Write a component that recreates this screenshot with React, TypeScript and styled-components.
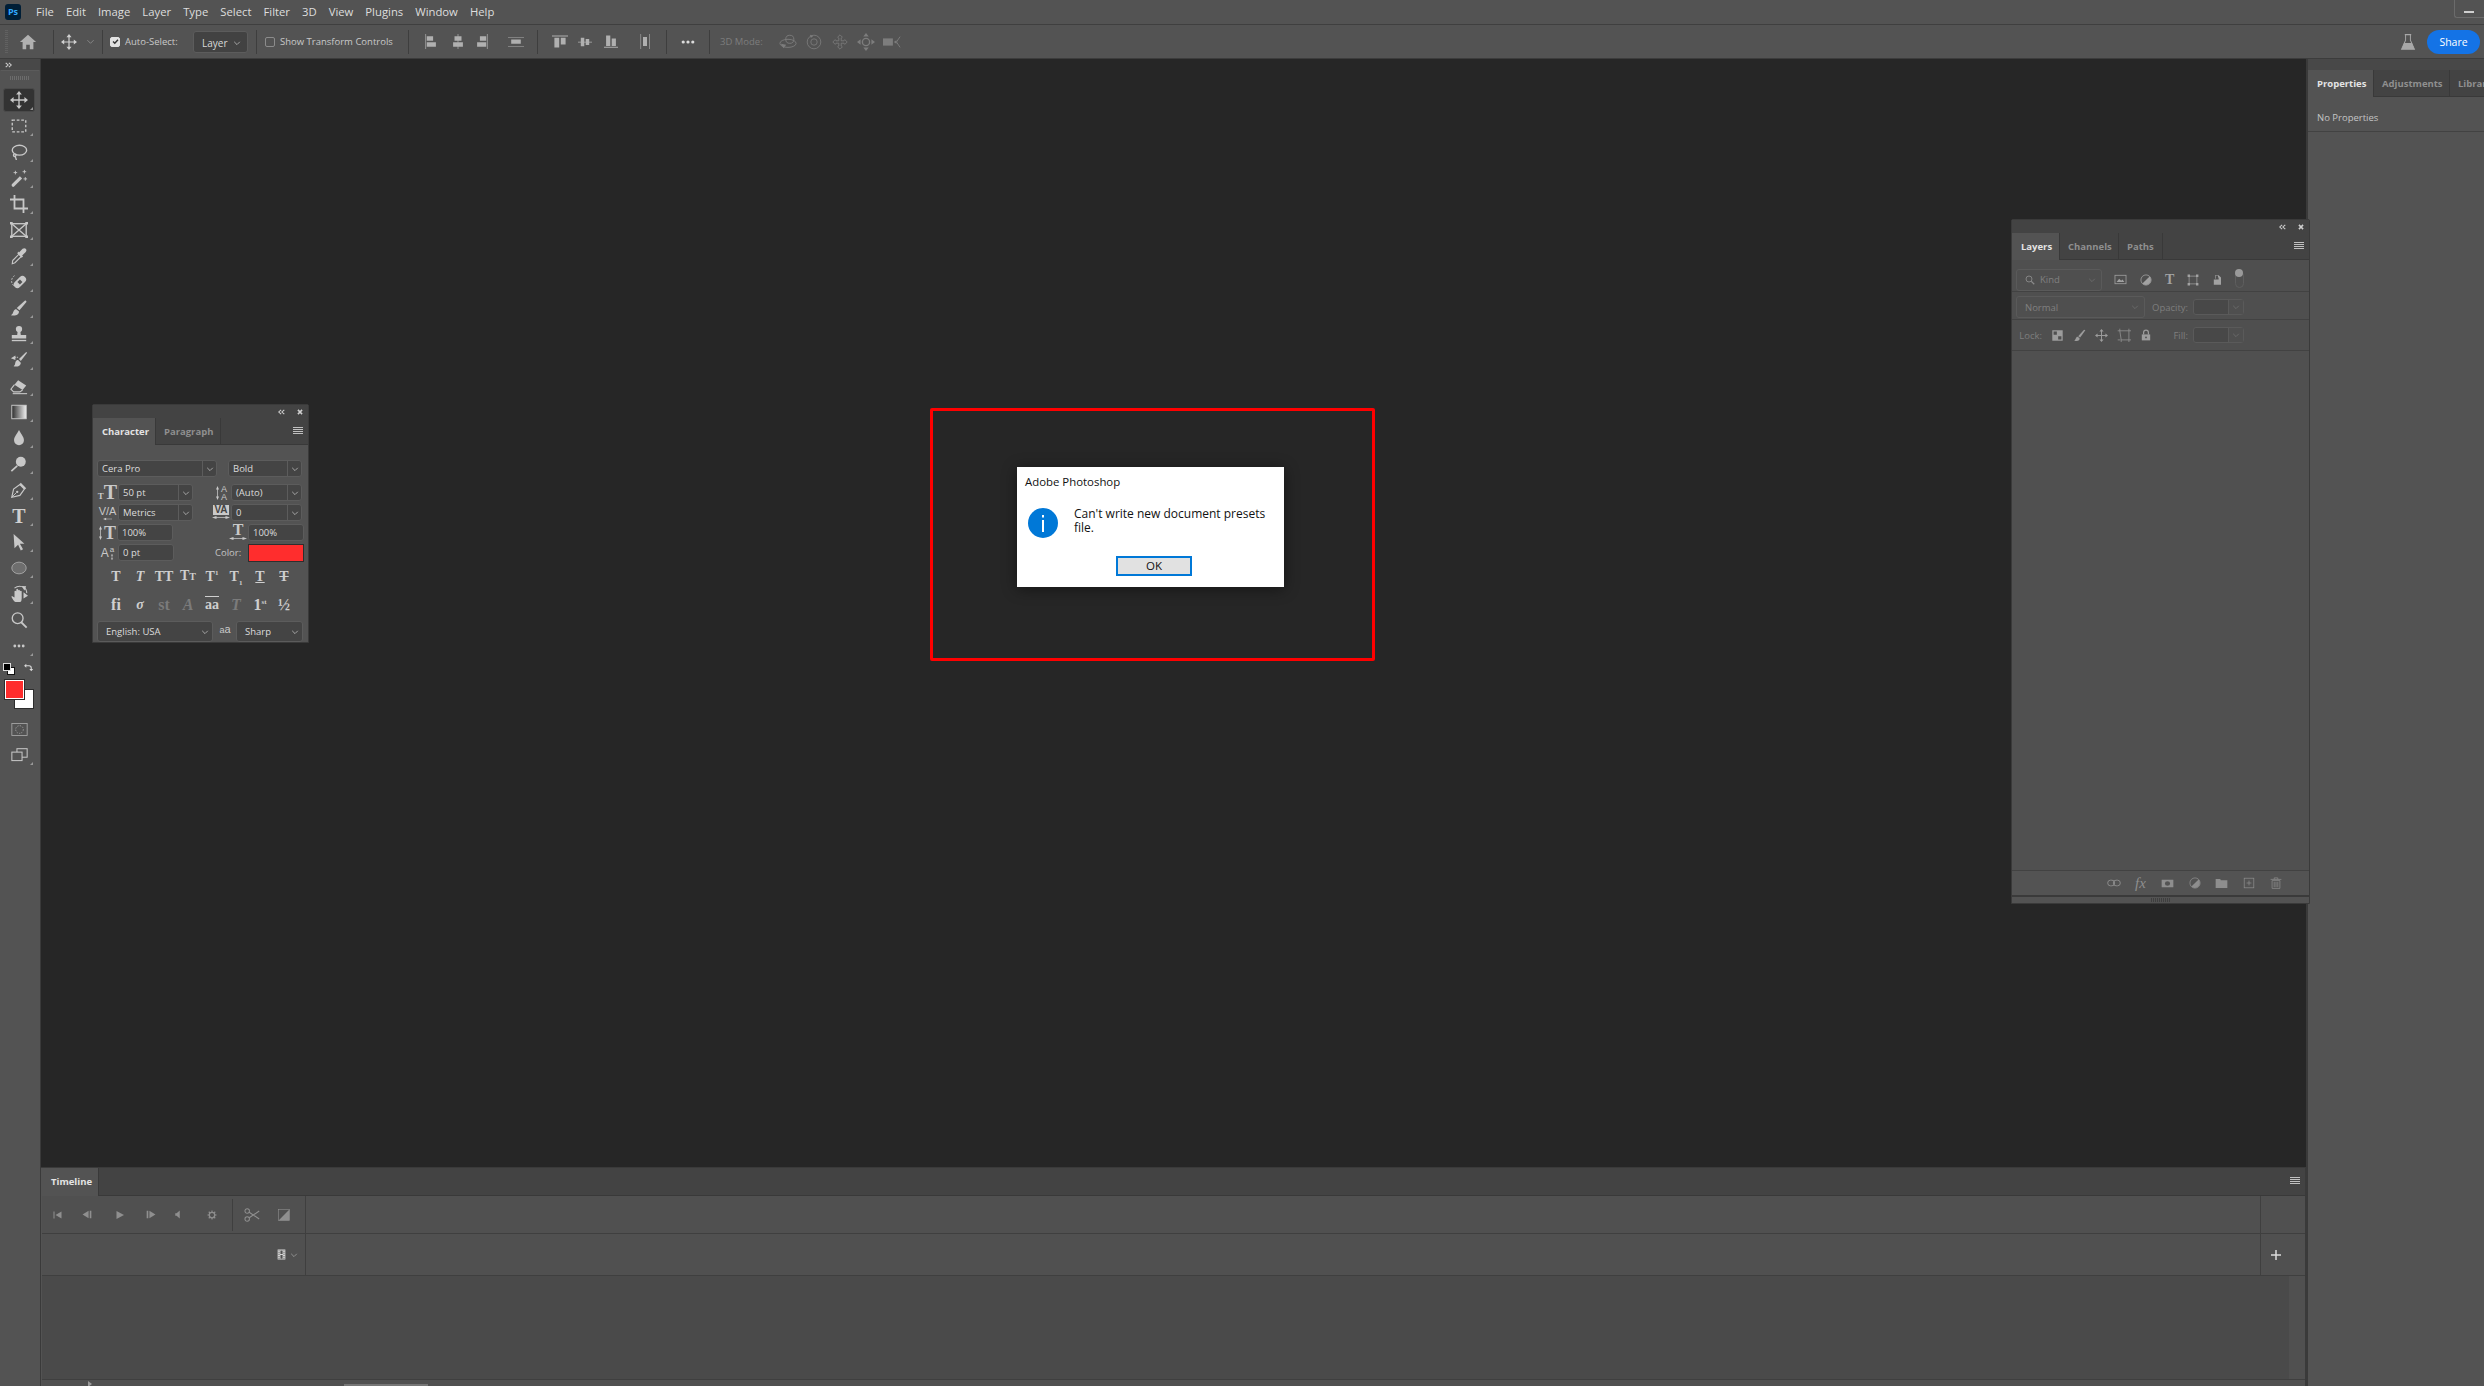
import React from "react";
import styled, { createGlobalStyle } from "styled-components";

const UI = `"Open Sans", "Noto Sans", "Liberation Sans", sans-serif`;
const SERIF = `"Liberation Serif", "DejaVu Serif", serif`;
const SANS = `"Liberation Sans", Arial, sans-serif`;

const GlobalStyle = createGlobalStyle`
  html, body { margin: 0; padding: 0; background: #262626; overflow: hidden; }
  * { box-sizing: border-box; }
`;

const Shell = styled.div`
  width: 2484px;
  height: 1386px;
  display: flex;
  flex-direction: column;
  background: #535353;
  font-family: ${UI};
  overflow: hidden;
`;

/* ---------- icon drawings, all on a 20x20 grid ---------- */
const line = { fill: "none", stroke: "currentColor", strokeWidth: 1.5 };
const icons: Record<string, React.ReactNode> = {
  home: <path d="M10 2l9 8h-3v8h-4v-5H8v5H4v-8H1z" />,
  move: <><path {...line} d="M10 3v14M3 10h14" /><path d="M10 0l3.2 4H6.8zM10 20l3.2-4H6.8zM0 10l4-3.2v6.4zM20 10l-4-3.2v6.4z" /></>,
  marquee: <rect x="2.5" y="3.5" width="15" height="13" {...line} strokeDasharray="3 2" />,
  lasso: <><ellipse cx="10.5" cy="8" rx="8" ry="5.5" {...line} /><path {...line} d="M5 12c-2 1-1 3 0 3 2 0 2-2 1-3M6 15c0 2 1 2 1 4" /></>,
  wand: <><path d="M2 17L11 8l2.500 2.500L4.500 19.500q-1 1-2 0t-.5-2.500z" /><path d="M6 2v4M4 4h4M16 1v4M14 3h4M17 9v4M15 11h4" {...line} strokeWidth={1} /></>,
  crop: <path d="M5 0v15h15M0 5h15v15" fill="none" stroke="currentColor" strokeWidth="2" />,
  frame: <><rect x="2" y="3" width="16" height="14" {...line} /><path d="M2 3l16 14M18 3L2 17" {...line} /><path d="M0 1h3v3H0zM17 1h3v3h-3zM0 16h3v3H0zM17 16h3v3h-3z" /></>,
  dropper: <><path d="M3 15L10 8l2.500 2.500-7 7-3 1z" {...line} strokeWidth={1.2} /><path d="M10 6l4-4q2-1.500 3.500 0t0 3.500l-4 4 1 1-1.500 1.500-5-5L9.500 5z" /></>,
  heal: <><g transform="rotate(-45 11 10)"><rect x="3" y="6" width="16" height="8" rx="4" /><rect x="9" y="8" width="4" height="4" fill="#535353" /></g><path d="M4 14A7 7 0 0 1 5 3" {...line} strokeWidth={1} strokeDasharray="2 1.500" /></>,
  brush: <><path d="M17 1.500l1.500 1.500-8 9.500-3-2.500z" /><path d="M7 11.500c-3 0-3 3-4 4.500-.5 1-1.500 1.500-2 2 4 1 9 .5 9-4z" /></>,
  stamp: <><circle cx="10" cy="4.500" r="3.500" /><path d="M8.500 7h3l.5 4h6v4H2v-4h6z" /><rect x="2" y="16.500" width="16" height="1.500" /></>,
  history: <><path d="M18 1l1 1-7 9-2-2z" /><path d="M9 10c-3 0-3 3-3.500 5-.5 1-1 1.500-1.500 2 3 1 8 0 8-4z" /><path d="M6 5L1 8l5 2z" /><path d="M5 7h4" {...line} strokeWidth={1} strokeDasharray="1.500 1" /></>,
  eraser: <><path d="M9 3.500l9 6-4 5-9-6z" /><path d="M5 8.500l-4 5 3 3h7l3-2" {...line} strokeWidth={1.200} /><path d="M3 18.500h16" {...line} strokeWidth={1.200} /></>,
  gradient: <><defs><linearGradient id="gr"><stop offset="0" stopColor="#2c2c2c" /><stop offset="1" stopColor="#f0f0f0" /></linearGradient></defs><rect x="2" y="2.500" width="16" height="15" fill="url(#gr)" stroke="#cfcfcf" strokeWidth="1" /></>,
  drop: <path d="M10 1c2.500 5 5.500 7.500 5.500 11.500a5.500 5.500 0 0 1-11 0C4.500 8.500 7.500 6 10 1z" />,
  dodge: <><circle cx="12" cy="7.500" r="5.500" /><path d="M8 12l-6.500 6" {...line} strokeWidth={1.800} /></>,
  pen: <><path d="M2 18l2-9 7-5 5 5-5 7z" {...line} strokeWidth={1.300} /><path d="M2 18l5-5" {...line} strokeWidth={1} /><circle cx="8" cy="12" r="1.300" /><path d="M12 2l6 6-1.500 1.500-6-6z" /></>,
  path: <path d="M4 1l12 11h-5l3.500 6-2.500 1.500-3-6.500L5 17z" />,
  ellipse: <ellipse cx="10" cy="10" rx="8" ry="6.500" fill="#6e6e6e" stroke="#a8a8a8" strokeWidth="1" />,
  hand: <><path d="M6 19c-2-1-3-3-4-5-1-1 0-2 1.500-1L5 14V7q1-1.500 2 0v4-6q1-1.500 2 0v6-5q1-1.500 2 0v5-4q1-1 2 0v8q0 3-1.500 4z" /><path d="M5 3.500Q10-.5 16 3q3 2 2.500 6" {...line} strokeWidth={1.200} /><path d="M13 1l5 .5-2 4.500zM15 8l5 4-5 3z" /></>,
  zoom: <><circle cx="8.500" cy="8" r="6" {...line} strokeWidth={1.500} /><path d="M12.500 12.500l6 6" {...line} strokeWidth={2} /></>,
  dots: <><circle cx="4" cy="10" r="2" /><circle cx="10" cy="10" r="2" /><circle cx="16" cy="10" r="2" /></>,
  swap: <path d="M2 5l4-3.500V4h5q5 0 5 5v2h2.500L15 15l-3.500-4H14V9q0-3-3-3H6v2.500z" />,
  quick: <><rect x="1" y="3" width="18" height="14" fill="none" stroke="currentColor" strokeWidth="1" /><circle cx="10" cy="10" r="4.500" fill="none" stroke="currentColor" strokeWidth="1" strokeDasharray="1.500 1.500" /></>,
  screen: <><rect x="7" y="2" width="12" height="10" {...line} strokeWidth={1.200} /><rect x="1" y="6" width="12" height="10" fill="#535353" stroke="currentColor" strokeWidth="1.200" /></>,
  alignL: <path d="M2 0h1v20H2zM4 3h9v6H4zM4 11h13v6H4z" />,
  alignC: <path d="M9.500 0h1v20h-1zM5 3h10v6H5zM3 11h14v6H3z" />,
  alignR: <path d="M17 0h1v20h-1zM7 3h9v6H7zM3 11h13v6H3z" />,
  distV: <path d="M0 2h20v1H0zM0 17h20v1H0zM4 6h12v7H4z" />,
  alignT: <path d="M0 2h20v1.200H0zM3 5h6v13H3zM11 5h6v9h-6z" />,
  alignM: <path d="M0 9.500h20v1.200H0zM4 3h5v14H4zM11 5h5v10h-5z" />,
  alignB: <path d="M0 17h20v1.200H0zM3 2h6v14H3zM11 6h6v10h-6z" />,
  distH: <path d="M1 0h1.200v20H1zM18 0h1.200v20H18zM6 4h8v12H6z" />,
  orbit: <><circle cx="12" cy="7" r="4.500" {...line} strokeWidth={1} /><ellipse cx="10" cy="11.500" rx="9" ry="4.500" {...line} strokeWidth={1} /><path d="M2 12l6 1-3 4z" /></>,
  roll: <><circle cx="10" cy="10" r="8.500" {...line} strokeWidth={1} /><circle cx="10" cy="10" r="4" {...line} strokeWidth={1} /><path d="M5 1l4 1.500L6 5z" /></>,
  pan3d: <path d="M10 1l3 3-1.500 1v3.500H15L16 7l3 3-3 3-1-1.500h-3.500V15l1.500 1-3 3-3-3 1.500-1v-3.500H5L4 13l-3-3 3-3 1 1.500h3.500V5L7 4z" fill="none" stroke="currentColor" strokeWidth="1" />,
  slide: <><circle cx="10" cy="10" r="4" {...line} /><path d="M10 0l3 4H7zM10 20l3-4H7zM0 10l4-3v6zM20 10l-4-3v6z" /></>,
  camera: <><rect x="0" y="6" width="11" height="8" /><path d="M12 10l3-2v4z" /><path d="M19 4l-4 6 4 6" {...line} strokeWidth={1} /></>,
  flask: <><path d="M7 2v6L2 18h16L13 8V2" {...line} strokeWidth={1.200} /><path d="M6 1h8v1.500H6zM5 11h10l3 7H2z" /></>,
  chev: <path d="M3 7l7 7 7-7" fill="none" stroke="currentColor" strokeWidth="2" />,
  tick: <path d="M3 10l5 5 9-10" fill="none" stroke="currentColor" strokeWidth="4" />,
  doubleRight: <path d="M2 3l7 7-7 7M11 3l7 7-7 7" fill="none" stroke="currentColor" strokeWidth="3" />,
  doubleLeft: <path d="M9 3l-7 7 7 7M18 3l-7 7 7 7" fill="none" stroke="currentColor" strokeWidth="3" />,
  cross: <path d="M3 3l14 14M17 3L3 17" fill="none" stroke="currentColor" strokeWidth="5" />,
  arrowH: <path d="M0 10l5-6v4.500h10V4l5 6-5 6v-4.500H5V16z" />,
  arrowV: <path d="M10 0l6 5h-4.500v10H16l-6 5-6-5h4.500V5H4z" />,
  arrowL: <path d="M0 10l7-6v4.500h13v3H7V16z" />,
  search: <><circle cx="8" cy="8" r="6" {...line} strokeWidth={1.800} /><path d="M12.500 12.500l6 6" {...line} strokeWidth={2.400} /></>,
  pixel: <><rect x="1.500" y="3.500" width="17" height="13" {...line} strokeWidth={1.200} /><path d="M4 14l4-5 3 3 2-2 3 4z" /></>,
  adjust: <><circle cx="10" cy="10" r="8.500" {...line} strokeWidth={1.300} /><path d="M16 4A8.500 8.500 0 0 1 4 16z" /></>,
  shape: <><rect x="3.500" y="3.500" width="13" height="13" {...line} strokeWidth={1.200} /><path d="M1 1h4v4H1zM15 1h4v4h-4zM1 15h4v4H1zM15 15h4v4h-4z" /></>,
  smart: <path d="M5 2h6l4 4v12H3V9h8V6h-1V3H6v5H5z" />,
  checker: <path d="M2 2h16v16H2zM4 4v5h5V4zM11 11v5h5v-5z" fillRule="evenodd" />,
  lockBrush: <><path d="M17 1l2 1-8 11-3-2z" /><path d="M7 12c-3 0-2 4-5 6 4 1 9 1 8-4z" /></>,
  artboard: <><path d="M4 4h13v13H6z" {...line} strokeWidth={1} /><path d="M1 4h3M4 1v3M17 17h3M17 17v3M1 17h4M6 17v3M17 1v3M17 4h3" {...line} strokeWidth={1} /></>,
  lock: <><path d="M6 9V6a4 4 0 0 1 8 0v3" {...line} strokeWidth={2} /><path d="M3 9h14v10H3z" /><circle cx="10" cy="14" r="1.500" fill="#4f4f4f" /></>,
  link: <><rect x="1" y="6" width="10" height="8" rx="4" {...line} strokeWidth={1.300} /><rect x="9" y="6" width="10" height="8" rx="4" {...line} strokeWidth={1.300} /></>,
  maskIcon: <path d="M1 3h18v14H1zM10 6a4 4 0 1 0 0 8 4 4 0 0 0 0-8z" fillRule="evenodd" />,
  folder: <path d="M1 3h7l1 2h10v12H1z" />,
  addNew: <><rect x="2" y="2" width="16" height="16" {...line} strokeWidth={1.200} /><path d="M10 6v8M6 10h8" {...line} strokeWidth={1.200} /></>,
  trash: <><path d="M1 4h18M7 4V1.500h6V4" {...line} strokeWidth={1.200} /><path d="M3.500 6h13v13h-13zM7 8v9M10 8v9M13 8v9" {...line} strokeWidth={1.200} /></>,
  first: <path d="M3 3h2v14H3zM19 3v14L7 10z" />,
  prev: <path d="M1 10l11-7v14zM14 3h3v14h-3z" />,
  play: <path d="M3 2l15 8-15 8z" />,
  next: <path d="M3 3h3v14H3zM8 3l11 7-11 7z" />,
  mute: <path d="M5 7h3l7-6v18l-7-6H5z" />,
  gear: <><circle cx="10" cy="10" r="5.500" {...line} strokeWidth={2.500} /><path d="M10 1v4M10 15v4M1 10h4M15 10h4M3.500 3.500l3 3M13.500 13.500l3 3M3.500 16.500l3-3M13.500 6.500l3-3" {...line} strokeWidth={2.200} /></>,
  scissors: <><circle cx="4" cy="5" r="2.800" {...line} strokeWidth={1.300} /><circle cx="4" cy="15" r="2.800" {...line} strokeWidth={1.300} /><path d="M6.500 6.500L19 15M6.500 13.500L19 5" {...line} strokeWidth={1.300} /></>,
  transition: <><rect x="1" y="1" width="18" height="18" {...line} strokeWidth={1} /><path d="M19 1v18H1z" /></>,
  film: <path d="M3 1h14v18H3zM4.500 2.500v1.500h2V2.500zM4.500 6v1.500h2V6zM4.500 9.500V11h2V9.500zM4.500 13v1.500h2V13zM4.500 16v1.500h2V16zM13.500 2.500V4h2V2.500zM13.500 6v1.500h2V6zM13.500 9.500V11h2V9.500zM13.500 13v1.500h2V13zM13.500 16v1.500h2V16zM8 2.500V9h4V2.500zM8 11v6.500h4V11z" fillRule="evenodd" />,
  plus: <path d="M8.500 0h3v8.500H20v3h-8.500V20h-3v-8.500H0v-3h8.500z" />,
};

const Svg = styled.svg<{ $ml?: number; $c?: string }>`
  flex: none;
  display: block;
  margin-left: ${(p) => p.$ml ?? 0}px;
  fill: currentColor;
  color: ${(p) => p.$c ?? "inherit"};
`;

type IconProps = { name: string; w: number; h?: number; ml?: number; c?: string };

const Icon = ({ name, w, h, ml, c }: IconProps) => (
  <Svg width={w} height={h ?? w} viewBox="0 0 20 20" preserveAspectRatio="none" $ml={ml} $c={c}>
    {icons[name]}
  </Svg>
);

/* ---------- menu ---------- */
const MenuBar = styled.div`
  height: 25px;
  flex: none;
  display: flex;
  align-items: center;
  padding-left: 5px;
  background: #535353;
  border-bottom: 1px solid #3f3f3f;
  position: relative;
`;

const PsLogo = styled.div`
  width: 16px;
  height: 16px;
  border-radius: 3px;
  background: #001e36;
  color: #31a8ff;
  font: 700 9px/16px ${UI};
  text-align: center;
  margin-right: 15px;
`;

const MenuList = styled.div`
  display: flex;
  gap: 12px;
`;

const MenuItem = styled.span`
  color: #dedede;
  font-size: 11.3px;
  line-height: 24px;
  white-space: nowrap;
`;

const MinButton = styled.div`
  position: absolute;
  right: 0;
  top: 0;
  width: 30px;
  height: 18px;
  border: 1px solid #6b6b6b;
  border-top: none;
  border-right: none;
  border-bottom-left-radius: 3px;
  &::after {
    content: "";
    position: absolute;
    left: 9px;
    top: 11px;
    width: 10px;
    height: 2px;
    background: #cfcfcf;
  }
`;

/* ---------- options bar ---------- */
const OptionsBar = styled.div`
  height: 34px;
  flex: none;
  display: flex;
  align-items: center;
  color: #b0b0b0;
  background: #535353;
  border-bottom: 1px solid #3c3c3c;
`;

const Grip = styled.div`
  margin-left: 5px;
  width: 3px;
  height: 24px;
  flex: none;
  background: repeating-linear-gradient(to bottom, #6a6a6a 0 1px, transparent 1px 2px);
  opacity: 0.6;
`;

const Sep = styled.div<{ $ml: number }>`
  margin-left: ${(p) => p.$ml}px;
  width: 1px;
  height: 24px;
  flex: none;
  background: #3e3e3e;
`;

const Check = styled.span<{ $ml: number; $on?: boolean }>`
  margin-left: ${(p) => p.$ml}px;
  width: 10px;
  height: 10px;
  flex: none;
  border-radius: 2px;
  display: flex;
  align-items: center;
  justify-content: center;
  background: ${(p) => (p.$on ? "#e2e2e2" : "transparent")};
  border: 1px solid ${(p) => (p.$on ? "#e2e2e2" : "#8c8c8c")};
`;

const OptLabel = styled.span<{ $ml: number; $w: number; $dim?: boolean }>`
  margin-left: ${(p) => p.$ml}px;
  width: ${(p) => p.$w}px;
  flex: none;
  font-size: 9.5px;
  white-space: nowrap;
  color: ${(p) => (p.$dim ? "#7d7d7d" : "#c9c9c9")};
`;

const OptSelect = styled.div`
  margin-left: 15px;
  width: 55px;
  height: 22px;
  flex: none;
  display: flex;
  align-items: center;
  justify-content: space-between;
  padding: 2px 6px 0 8px;
  background: #424242;
  border: 1px solid #5c5c5c;
  border-radius: 3px;
  color: #d8d8d8;
  font-size: 10px;
`;

const Spacer = styled.div`
  flex: 1;
`;

const ShareButton = styled.div`
  margin: 0 4px 0 11px;
  width: 53px;
  height: 24px;
  flex: none;
  border-radius: 12px;
  background: #1473e6;
  color: #fff;
  font-size: 10.5px;
  line-height: 24px;
  text-align: center;
`;

/* ---------- workspace ---------- */
const Workspace = styled.div`
  flex: 1;
  min-height: 0;
  display: flex;
`;

const ToolColumn = styled.div`
  width: 41px;
  flex: none;
  display: flex;
  flex-direction: column;
  background: #535353;
  border-right: 1px solid #3a3a3a;
`;

const ToolHead = styled.div`
  height: 11px;
  flex: none;
  display: flex;
  align-items: center;
  padding-left: 5px;
  color: #d0d0d0;
  background: #484848;
`;

const ToolBox = styled.div`
  flex: 1;
  margin: 0 1px;
  display: flex;
  flex-direction: column;
  color: #c8c8c8;
  border-top: 1px solid #5b5b5b;
`;

const ToolGrip = styled.div`
  margin: 5px auto 0;
  width: 20px;
  height: 4px;
  flex: none;
  background: repeating-linear-gradient(to right, #6c6c6c 0 1px, transparent 1px 2px);
`;

const ToolList = styled.div`
  margin-top: 7px;
  display: flex;
  flex-direction: column;
`;

const ToolButton = styled.div<{ $active?: boolean; $flyout?: boolean }>`
  position: relative;
  width: 32px;
  height: 26px;
  margin-left: 2px;
  display: flex;
  align-items: center;
  justify-content: center;
  &::before {
    content: "";
    display: ${(p) => (p.$active ? "block" : "none")};
    position: absolute;
    inset: 1px 0;
    background: #333;
    border: 1px solid #4a4a4a;
    border-radius: 3px;
  }
  &::after {
    content: "";
    display: ${(p) => (p.$flyout === false ? "none" : "block")};
    position: absolute;
    right: 2px;
    bottom: 3px;
    border-left: 3px solid transparent;
    border-bottom: 3px solid #999;
  }
  & > * {
    position: relative;
    z-index: 1;
  }
`;

const TypeToolGlyph = styled.span`
  color: #d0d0d0;
  font: 700 20px/20px ${SERIF};
`;

const ColorWell = styled.div`
  position: relative;
  height: 54px;
  flex: none;
  margin-top: 3px;
`;

const MiniBack = styled.span`
  position: absolute;
  left: 6px;
  top: 5px;
  width: 8px;
  height: 8px;
  background: #fff;
  border: 1px solid #111;
`;

const MiniFront = styled.span`
  position: absolute;
  left: 2px;
  top: 1px;
  width: 8px;
  height: 8px;
  background: #000;
  border: 1px solid #ddd;
`;

const SwapSlot = styled.span`
  position: absolute;
  left: 22px;
  top: 1px;
`;

const BackSwatch = styled.span`
  position: absolute;
  left: 13px;
  top: 27px;
  width: 20px;
  height: 20px;
  background: #fff;
  border: 1px solid #2d2d2d;
`;

const FrontSwatch = styled.span`
  position: absolute;
  left: 4px;
  top: 18px;
  width: 19px;
  height: 19px;
  background: #ff2d2d;
  border: 1px solid #fff;
  outline: 1px solid #2d2d2d;
`;

const ToolExtra = styled.div<{ $mt: number }>`
  margin: ${(p) => p.$mt}px 0 0 10px;
  color: #a8a8a8;
`;

const ToolScreen = styled(ToolButton)`
  margin-top: 4px;
`;

/* ---------- centre ---------- */
const Center = styled.div`
  flex: 1;
  min-width: 0;
  display: flex;
  flex-direction: column;
`;

const DocArea = styled.div`
  flex: 1;
  position: relative;
  background: #262626;
`;

const RedFrame = styled.div`
  position: absolute;
  left: 889px;
  top: 349px;
  width: 445px;
  height: 253px;
  border: 3px solid #f00;
  border-radius: 2px;
`;

const Dialog = styled.div`
  position: absolute;
  left: 84px;
  top: 56px;
  width: 267px;
  height: 120px;
  background: #fff;
  box-shadow: 0 2px 14px rgba(0, 0, 0, 0.45);
  color: #111;
  display: flex;
  flex-direction: column;
`;

const DialogTitle = styled.div`
  padding: 7px 0 0 8px;
  font-size: 11.4px;
  line-height: 16px;
`;

const DialogBody = styled.div`
  display: flex;
  margin-top: 16px;
  padding-left: 11px;
`;

const InfoIcon = styled.svg`
  flex: none;
  margin-top: 2px;
`;

const DialogText = styled.div`
  margin-left: 16px;
  width: 196px;
  font-size: 12px;
  line-height: 13.5px;
  margin-top: 1px;
`;

const OkButton = styled.div`
  margin: 18px 0 0 99px;
  width: 76px;
  height: 20px;
  background: #e1e1e1;
  border: 2px solid #0078d7;
  text-align: center;
  font-size: 11.5px;
  line-height: 16px;
`;

/* ---------- floating panels ---------- */
const FloatPanel = styled.div<{ $x: number; $y: number; $w: number; $h: number }>`
  position: absolute;
  left: ${(p) => p.$x}px;
  top: ${(p) => p.$y}px;
  width: ${(p) => p.$w}px;
  height: ${(p) => p.$h}px;
  display: flex;
  flex-direction: column;
  background: #535353;
  border: 1px solid #3a3a3a;
  border-radius: 2px 2px 0 0;
  overflow: hidden;
`;

const PanelTitle = styled.div`
  height: 13px;
  flex: none;
  display: flex;
  align-items: center;
  justify-content: flex-end;
  gap: 12px;
  padding: 1px 5px 0 0;
  background: #434343;
  color: #cfcfcf;
`;

const TabStrip = styled.div`
  height: 27px;
  flex: none;
  display: flex;
  align-items: stretch;
  background: #434343;
  border-bottom: 1px solid #393939;
  position: relative;
`;

const Tab = styled.div<{ $active?: boolean; $w: number }>`
  width: ${(p) => p.$w}px;
  flex: none;
  font-size: 9.5px;
  font-weight: 700;
  line-height: 27px;
  padding-left: ${(p) => (p.$active ? 9 : 8)}px;
  white-space: nowrap;
  overflow: hidden;
  color: ${(p) => (p.$active ? "#e4e4e4" : "#8f8f8f")};
  background: ${(p) => (p.$active ? "#535353" : "transparent")};
  border-right: 1px solid #393939;
  margin-bottom: ${(p) => (p.$active ? "-1px" : "0")};
`;

const PanelMenu = styled.div`
  position: absolute;
  right: 5px;
  top: 9px;
  width: 10px;
  height: 7px;
  background: repeating-linear-gradient(to bottom, #c0c0c0 0 1px, transparent 1px 2px);
`;

const CharBody = styled.div`
  flex: 1;
  display: flex;
  flex-direction: column;
  padding: 15px 0 0 4px;
  color: #c6c6c6;
`;

const FieldRow = styled.div<{ $mt?: number }>`
  height: 17px;
  flex: none;
  display: flex;
  align-items: center;
  margin-top: ${(p) => p.$mt ?? 3}px;
`;

const Field = styled.div<{ $ml?: number; $w: number; $chev?: boolean; $h?: number; $pad?: number }>`
  margin-left: ${(p) => p.$ml ?? 0}px;
  width: ${(p) => p.$w}px;
  height: ${(p) => p.$h ?? 17}px;
  flex: none;
  display: flex;
  align-items: center;
  padding-left: ${(p) => p.$pad ?? 4}px;
  position: relative;
  background: #444;
  border: 1px solid #5c5c5c;
  border-radius: 3px;
  color: #dcdcdc;
  font-size: 9.5px;
  white-space: nowrap;
  padding-right: ${(p) => (p.$chev ? "15px" : "0")};
`;

const ChevBox = styled.span<{ $plain?: boolean }>`
  position: absolute;
  right: 0;
  top: 0;
  bottom: 0;
  width: 14px;
  display: flex;
  align-items: center;
  justify-content: center;
  border-left: ${(p) => (p.$plain ? "none" : "1px solid #5c5c5c")};
  color: #bdbdbd;
`;

/* the small marks beside the character fields */
const Mark = styled.span<{ $ml?: number; $w: number; $stack?: boolean; $mid?: boolean }>`
  margin-left: ${(p) => p.$ml ?? 0}px;
  width: ${(p) => p.$w}px;
  height: 17px;
  flex: none;
  display: flex;
  flex-direction: ${(p) => (p.$stack ? "column" : "row")};
  align-items: ${(p) => (p.$stack || p.$mid ? "center" : "baseline")};
  justify-content: center;
  gap: ${(p) => (p.$mid ? 1 : 0)}px;
  color: #c9c9c9;
  white-space: nowrap;
`;

const MarkColumn = styled.span`
  display: flex;
  flex-direction: column;
  align-items: center;
`;

const SerifText = styled.span<{ $size: number; $lh?: number }>`
  font: 700 ${(p) => p.$size}px/${(p) => p.$lh ?? 16}px ${SERIF};
`;

const SansText = styled.span<{ $size: number; $lh?: number }>`
  font: 400 ${(p) => p.$size}px/${(p) => p.$lh ?? 12}px ${SANS};
`;

const InvertedText = styled.span`
  background: #c9c9c9;
  color: #444;
  padding: 0 1px;
  font: 700 10px/10px ${SANS};
`;

const ColorLabel = styled.span`
  margin-left: 41px;
  width: 33px;
  font-size: 9.5px;
  color: #c4c4c4;
  flex: none;
`;

const ColorChip = styled.span`
  width: 56px;
  height: 18px;
  flex: none;
  background: #ff2d2d;
  border: 1px solid #2e2e2e;
`;

const GlyphRow = styled.div<{ $mt: number }>`
  height: 20px;
  flex: none;
  display: grid;
  grid-template-columns: repeat(8, 24px);
  margin: ${(p) => p.$mt}px 0 0 7px;
  align-items: center;
`;

const StyleGlyph = styled.span<{ $dim?: boolean; $italic?: boolean; $deco?: string; $big?: boolean }>`
  text-align: center;
  font: ${(p) => (p.$italic ? "italic " : "")}700 ${(p) => (p.$big ? 16 : 14)}px/20px ${SERIF};
  color: ${(p) => (p.$dim ? "#7b7b7b" : "#cfcfcf")};
  text-decoration: ${(p) => p.$deco ?? "none"};
  white-space: nowrap;
  & sup, & sub {
    font-size: 7px;
    line-height: 0;
  }
`;

const SmallCaps = styled.span`
  font-size: 10px;
`;

/* ---------- layers panel ---------- */
const LayerRow = styled.div<{ $h: number; $pt: number }>`
  height: ${(p) => p.$h}px;
  flex: none;
  display: flex;
  align-items: center;
  padding: ${(p) => p.$pt}px 0 0 4px;
  background: #4f4f4f;
  border-bottom: 1px solid #424242;
  color: #888;
`;

const DimField = styled.div<{ $ml?: number; $w: number; $h: number; $t?: boolean }>`
  margin-left: ${(p) => p.$ml ?? 0}px;
  width: ${(p) => p.$w}px;
  height: ${(p) => p.$h}px;
  flex: none;
  display: flex;
  align-items: center;
  padding-left: 8px;
  gap: 5px;
  position: relative;
  border: 1px solid #5a5a5a;
  border-radius: 3px;
  background: ${(p) => (p.$t ? "transparent" : "#484848")};
  color: #808080;
  font-size: 9.5px;
`;

const DimChev = styled.span`
  position: absolute;
  right: 5px;
  top: 50%;
  margin-top: -4px;
  color: #6f6f6f;
`;

const SplitChev = styled(DimChev)`
  top: 0;
  bottom: 0;
  right: 0;
  margin: 0;
  width: 15px;
  display: flex;
  align-items: center;
  justify-content: center;
  background: #4f4f4f;
  border-left: 1px solid #5a5a5a;
`;

const DimLabel = styled.span<{ $ml: number; $w: number }>`
  margin-left: ${(p) => p.$ml}px;
  width: ${(p) => p.$w}px;
  flex: none;
  font-size: 9.5px;
  color: #7e7e7e;
  white-space: nowrap;
  text-align: right;
`;

const LayerTypeMark = styled.span<{ $ml: number }>`
  margin-left: ${(p) => p.$ml}px;
  font: 700 14px/14px ${SERIF};
  color: #a2a2a2;
  flex: none;
`;

const FilterToggle = styled.span`
  margin-left: 11px;
  width: 9px;
  height: 17px;
  flex: none;
  position: relative;
  border: 1px solid #5e5e5e;
  border-radius: 5px;
  &::after {
    content: "";
    position: absolute;
    left: -1px;
    top: -3px;
    width: 8px;
    height: 8px;
    border-radius: 50%;
    background: #9a9a9a;
  }
`;

const LayerList = styled.div`
  flex: 1;
  background: #505050;
`;

const LayerFoot = styled.div`
  height: 25px;
  flex: none;
  display: flex;
  align-items: center;
  color: #8e8e8e;
  padding-left: 88px;
  background: #535353;
  border-top: 1px solid #424242;
`;

const FootSlot = styled.span`
  width: 27px;
  flex: none;
  display: flex;
  align-items: center;
  justify-content: center;
`;

const FxText = styled.span`
  font: italic 400 15px/16px ${SERIF};
`;

const LayerGrip = styled.div`
  height: 8px;
  flex: none;
  position: relative;
  background: #535353;
  border-top: 2px solid #3a3a3a;
  &::after {
    content: "";
    position: absolute;
    left: 139px;
    top: 1px;
    width: 19px;
    height: 4px;
    background: repeating-linear-gradient(to right, #3f3f3f 0 1px, transparent 1px 2px);
  }
`;

/* ---------- timeline ---------- */
const Timeline = styled.div`
  height: 219px;
  flex: none;
  display: flex;
  flex-direction: column;
  background: #535353;
  border-top: 1px solid #3a3a3a;
  padding-left: 1px;
  border-right: 1px solid #3a3a3a;
`;

const TimelineTabs = styled.div`
  height: 28px;
  flex: none;
  display: flex;
  position: relative;
  background: #434343;
  border-bottom: 1px solid #393939;
`;

const TimelineRow = styled.div<{ $h: number }>`
  height: ${(p) => p.$h}px;
  flex: none;
  display: grid;
  grid-template-columns: 264px 1fr 44px;
  background: #505050;
  border-bottom: 1px solid #3f3f3f;
`;

const TimelineCell = styled.div<{ $edge?: boolean }>`
  display: flex;
  align-items: center;
  color: #8f8f8f;
  border-right: ${(p) => (p.$edge ? "1px solid #3f3f3f" : "none")};
`;

const PlusCell = styled(TimelineCell)`
  justify-content: center;
  padding-right: 15px;
  color: #dcdcdc;
`;

const TimelineBody = styled.div`
  flex: 1;
  display: flex;
`;

const TrackArea = styled.div`
  flex: 1;
  background: #4a4a4a;
`;

const TrackEdge = styled.div`
  width: 16px;
  flex: none;
  background: #505050;
`;

const TimelineFoot = styled.div`
  height: 7px;
  flex: none;
  position: relative;
  background: #505050;
  border-top: 1px solid #3f3f3f;
`;

const FootThumb = styled.div`
  position: absolute;
  left: 302px;
  top: 4px;
  width: 84px;
  height: 3px;
  background: #767676;
`;

const FootMark = styled.div`
  position: absolute;
  left: 46px;
  top: 1px;
  border-left: 4px solid #9a9a9a;
  border-top: 3px solid transparent;
  border-bottom: 3px solid transparent;
`;

const ToolDivider = styled.div`
  margin-left: 15px;
  width: 1px;
  height: 32px;
  flex: none;
  background: #3f3f3f;
`;

/* ---------- right dock ---------- */
const Dock = styled.div`
  width: 178px;
  flex: none;
  display: flex;
  flex-direction: column;
  background: #535353;
  border-left: 2px solid #3a3a3a;
`;

const DockHead = styled.div`
  height: 11px;
  flex: none;
  background: #484848;
`;

const DockNote = styled.div`
  height: 35px;
  flex: none;
  padding: 14px 0 0 9px;
  border-bottom: 1px solid #424242;
  color: #c4c4c4;
  font-size: 9.5px;
`;

const tools = [
  "move", "marquee", "lasso", "wand", "crop", "frame", "dropper", "heal", "brush", "stamp", "history",
  "eraser", "gradient", "drop", "dodge", "pen", "type", "path", "ellipse", "hand", "zoom", "dots",
];

const menus = ["File", "Edit", "Image", "Layer", "Type", "Select", "Filter", "3D", "View", "Plugins", "Window", "Help"];

const Combo = ({ w, ml, h, pad, plain, children }: { w: number; ml?: number; h?: number; pad?: number; plain?: boolean; children: React.ReactNode }) => (
  <Field $w={w} $ml={ml} $h={h} $pad={pad} $chev>
    {children}
    <ChevBox $plain={plain}>
      <Icon name="chev" w={8} />
    </ChevBox>
  </Field>
);

const PanelControls = () => (
  <PanelTitle>
    <Icon name="doubleLeft" w={7} h={6} />
    <Icon name="cross" w={6} />
  </PanelTitle>
);

const CharacterPanel = () => (
  <FloatPanel $x={51} $y={345} $w={217} $h={239}>
    <PanelControls />
    <TabStrip>
      <Tab $active $w={63}>Character</Tab>
      <Tab $w={65}>Paragraph</Tab>
      <PanelMenu />
    </TabStrip>
    <CharBody>
      <FieldRow $mt={0}>
        <Combo w={120}>Cera Pro</Combo>
        <Combo w={74} ml={11}>Bold</Combo>
      </FieldRow>
      <FieldRow $mt={7}>
        <Mark $w={21}>
          <SerifText $size={9}>T</SerifText>
          <SerifText $size={20}>T</SerifText>
        </Mark>
        <Combo w={75}>50 pt</Combo>
        <Mark $ml={18} $w={20} $mid>
          <Icon name="arrowV" w={5} h={14} />
          <MarkColumn>
            <SansText $size={9} $lh={8}>A</SansText>
            <SansText $size={9} $lh={8}>A</SansText>
          </MarkColumn>
        </Mark>
        <Combo w={71}>(Auto)</Combo>
      </FieldRow>
      <FieldRow>
        <Mark $w={21} $stack>
          <SansText $size={11} $lh={12}>V/A</SansText>
          <Icon name="arrowL" w={9} h={4} />
        </Mark>
        <Combo w={75}>Metrics</Combo>
        <Mark $ml={18} $w={20} $stack>
          <InvertedText>VA</InvertedText>
          <Icon name="arrowH" w={18} h={5} />
        </Mark>
        <Combo w={71}>0</Combo>
      </FieldRow>
      <FieldRow>
        <Mark $w={20} $mid>
          <Icon name="arrowV" w={5} h={14} />
          <SerifText $size={18}>T</SerifText>
        </Mark>
        <Field $w={56}>100%</Field>
        <Mark $ml={55} $w={20} $stack>
          <SerifText $size={16} $lh={12}>T</SerifText>
          <Icon name="arrowH" w={18} h={5} />
        </Mark>
        <Field $w={56}>100%</Field>
      </FieldRow>
      <FieldRow>
        <Mark $w={21} $mid>
          <SansText $size={12}>A</SansText>
          <MarkColumn>
            <SansText $size={8} $lh={8}>a</SansText>
            <Icon name="arrowV" w={4} h={6} />
          </MarkColumn>
        </Mark>
        <Field $w={56}>0 pt</Field>
        <ColorLabel>Color:</ColorLabel>
        <ColorChip />
      </FieldRow>
      <GlyphRow $mt={5}>
        <StyleGlyph>T</StyleGlyph>
        <StyleGlyph $italic>T</StyleGlyph>
        <StyleGlyph>TT</StyleGlyph>
        <StyleGlyph>T<SmallCaps>T</SmallCaps></StyleGlyph>
        <StyleGlyph>T<sup>1</sup></StyleGlyph>
        <StyleGlyph>T<sub>1</sub></StyleGlyph>
        <StyleGlyph $deco="underline">T</StyleGlyph>
        <StyleGlyph $deco="line-through">T</StyleGlyph>
      </GlyphRow>
      <GlyphRow $mt={9}>
        <StyleGlyph $big>fi</StyleGlyph>
        <StyleGlyph $italic>σ</StyleGlyph>
        <StyleGlyph $dim $big>st</StyleGlyph>
        <StyleGlyph $dim $italic $big>A</StyleGlyph>
        <StyleGlyph $deco="overline">aa</StyleGlyph>
        <StyleGlyph $dim $italic $big>T</StyleGlyph>
        <StyleGlyph $big>1<sup>st</sup></StyleGlyph>
        <StyleGlyph $big>½</StyleGlyph>
      </GlyphRow>
      <FieldRow $mt={8}>
        <Combo w={116} h={21} pad={8} plain>English: USA</Combo>
        <Mark $ml={3} $w={18}>
          <SansText $size={9}>a</SansText>
          <SansText $size={11}>a</SansText>
        </Mark>
        <Combo ml={2} w={67} h={21} pad={8} plain>Sharp</Combo>
      </FieldRow>
    </CharBody>
  </FloatPanel>
);

const LayersPanel = () => (
  <FloatPanel $x={1970} $y={160} $w={299} $h={685}>
    <PanelControls />
    <TabStrip>
      <Tab $active $w={48}>Layers</Tab>
      <Tab $w={59}>Channels</Tab>
      <Tab $w={44}>Paths</Tab>
      <PanelMenu />
    </TabStrip>
    <LayerRow $h={32} $pt={8}>
      <DimField $w={86} $h={22} $t>
        <Icon name="search" w={10} c="#8a8a8a" />
        Kind
        <DimChev><Icon name="chev" w={8} /></DimChev>
      </DimField>
      <Icon name="pixel" w={13} ml={12} c="#a2a2a2" />
      <Icon name="adjust" w={12} ml={13} c="#a2a2a2" />
      <LayerTypeMark $ml={13}>T</LayerTypeMark>
      <Icon name="shape" w={12} ml={13} c="#a2a2a2" />
      <Icon name="smart" w={12} ml={13} c="#a2a2a2" />
      <FilterToggle />
    </LayerRow>
    <LayerRow $h={28} $pt={3}>
      <DimField $w={129} $h={22} $t>
        Normal
        <DimChev><Icon name="chev" w={8} /></DimChev>
      </DimField>
      <DimLabel $ml={7} $w={36}>Opacity:</DimLabel>
      <DimField $ml={5} $w={51} $h={16}>
        <SplitChev><Icon name="chev" w={8} /></SplitChev>
      </DimField>
    </LayerRow>
    <LayerRow $h={31} $pt={0}>
      <DimLabel $ml={3} $w={23}>Lock:</DimLabel>
      <Icon name="checker" w={13} ml={9} c="#9c9c9c" />
      <Icon name="lockBrush" w={13} ml={9} c="#9c9c9c" />
      <Icon name="move" w={13} ml={9} c="#9c9c9c" />
      <Icon name="artboard" w={14} ml={9} c="#9c9c9c" />
      <Icon name="lock" w={12} ml={9} c="#9c9c9c" />
      <DimLabel $ml={21} $w={15}>Fill:</DimLabel>
      <DimField $ml={5} $w={51} $h={16}>
        <SplitChev><Icon name="chev" w={8} /></SplitChev>
      </DimField>
    </LayerRow>
    <LayerList />
    <LayerFoot>
      <FootSlot><Icon name="link" w={14} /></FootSlot>
      <FootSlot><FxText>fx</FxText></FootSlot>
      <FootSlot><Icon name="maskIcon" w={13} h={11} /></FootSlot>
      <FootSlot><Icon name="adjust" w={12} /></FootSlot>
      <FootSlot><Icon name="folder" w={13} /></FootSlot>
      <FootSlot><Icon name="addNew" w={12} /></FootSlot>
      <FootSlot><Icon name="trash" w={12} /></FootSlot>
    </LayerFoot>
    <LayerGrip />
  </FloatPanel>
);

const App = () => (
  <Shell>
    <GlobalStyle />
    <MenuBar>
      <PsLogo>Ps</PsLogo>
      <MenuList>
        {menus.map((m) => (
          <MenuItem key={m}>{m}</MenuItem>
        ))}
      </MenuList>
      <MinButton />
    </MenuBar>
    <OptionsBar>
      <Grip />
      <Icon name="home" w={18} ml={11} />
      <Sep $ml={16} />
      <Icon name="move" w={16} ml={7} c="#d0d0d0" />
      <Icon name="chev" w={9} ml={9} c="#8a8a8a" />
      <Sep $ml={7} />
      <Check $ml={7} $on>
        <Icon name="tick" w={7} c="#333" />
      </Check>
      <OptLabel $ml={5} $w={53}>Auto-Select:</OptLabel>
      <OptSelect>
        Layer
        <Icon name="chev" w={8} c="#bdbdbd" />
      </OptSelect>
      <Sep $ml={8} />
      <Check $ml={8} />
      <OptLabel $ml={5} $w={111}>Show Transform Controls</OptLabel>
      <Sep $ml={17} />
      <Icon name="alignL" w={14} h={15} ml={15} />
      <Icon name="alignC" w={14} h={15} ml={13} />
      <Icon name="alignR" w={14} h={15} ml={10} />
      <Icon name="distV" w={16} h={12} ml={19} />
      <Sep $ml={13} />
      <Icon name="alignT" w={16} h={15} ml={14} />
      <Icon name="alignM" w={14} h={12} ml={10} />
      <Icon name="alignB" w={14} h={15} ml={12} />
      <Icon name="distH" w={10} h={15} ml={22} />
      <Sep $ml={16} />
      <Icon name="dots" w={16} ml={13} c="#dcdcdc" />
      <Sep $ml={13} />
      <OptLabel $ml={10} $w={42} $dim>3D Mode:</OptLabel>
      <Icon name="orbit" w={18} ml={17} c="#7d7d7d" />
      <Icon name="roll" w={16} ml={9} c="#7d7d7d" />
      <Icon name="pan3d" w={16} ml={10} c="#7d7d7d" />
      <Icon name="slide" w={18} ml={9} c="#7d7d7d" />
      <Icon name="camera" w={18} ml={8} c="#7d7d7d" />
      <Spacer />
      <Icon name="flask" w={16} h={18} c="#a8a8a8" />
      <ShareButton>Share</ShareButton>
    </OptionsBar>
    <Workspace>
      <ToolColumn>
        <ToolHead>
          <Icon name="doubleRight" w={7} h={6} />
        </ToolHead>
        <ToolBox>
          <ToolGrip />
          <ToolList>
            {tools.map((t, i) => (
              <ToolButton key={t} $active={i === 0} $flyout={t !== "zoom"}>
                {t === "type" ? <TypeToolGlyph>T</TypeToolGlyph> : <Icon name={t} w={t === "dots" ? 14 : 18} />}
              </ToolButton>
            ))}
          </ToolList>
          <ColorWell>
            <MiniBack />
            <MiniFront />
            <SwapSlot><Icon name="swap" w={11} c="#d8d8d8" /></SwapSlot>
            <BackSwatch />
            <FrontSwatch />
          </ColorWell>
          <ToolExtra $mt={5}>
            <Icon name="quick" w={17} />
          </ToolExtra>
          <ToolScreen>
            <Icon name="screen" w={17} />
          </ToolScreen>
        </ToolBox>
      </ToolColumn>
      <Center>
        <DocArea>
          <RedFrame>
            <Dialog>
              <DialogTitle>Adobe Photoshop</DialogTitle>
              <DialogBody>
                <InfoIcon width="30" height="30" viewBox="0 0 30 30">
                  <circle cx="15" cy="15" r="15" fill="#0078d7" />
                  <rect x="14" y="12" width="2" height="12" fill="#fff" />
                  <rect x="14" y="7" width="2" height="2.5" fill="#fff" />
                </InfoIcon>
                <DialogText>Can't write new document presets file.</DialogText>
              </DialogBody>
              <OkButton>OK</OkButton>
            </Dialog>
          </RedFrame>
          <CharacterPanel />
          <LayersPanel />
        </DocArea>
        <Timeline>
          <TimelineTabs>
            <Tab $active $w={57}>Timeline</Tab>
            <PanelMenu />
          </TimelineTabs>
          <TimelineRow $h={38}>
            <TimelineCell $edge>
              <Icon name="first" w={10} ml={10} />
              <Icon name="prev" w={11} ml={20} />
              <Icon name="play" w={10} ml={22} />
              <Icon name="next" w={11} ml={20} />
              <Icon name="mute" w={9} ml={17} />
              <Icon name="gear" w={10} ml={25} />
              <ToolDivider />
              <Icon name="scissors" w={16} ml={11} />
              <Icon name="transition" w={12} ml={18} />
            </TimelineCell>
            <TimelineCell $edge />
            <TimelineCell />
          </TimelineRow>
          <TimelineRow $h={42}>
            <TimelineCell $edge>
              <Icon name="film" w={11} ml={234} c="#d6d6d6" />
              <Icon name="chev" w={8} ml={3} c="#a0a0a0" />
            </TimelineCell>
            <TimelineCell $edge />
            <PlusCell>
              <Icon name="plus" w={10} />
            </PlusCell>
          </TimelineRow>
          <TimelineBody>
            <TrackArea />
            <TrackEdge />
          </TimelineBody>
          <TimelineFoot>
            <FootMark />
            <FootThumb />
          </TimelineFoot>
        </Timeline>
      </Center>
      <Dock>
        <DockHead />
        <TabStrip>
          <Tab $active $w={66}>Properties</Tab>
          <Tab $w={76}>Adjustments</Tab>
          <Tab $w={40}>Libraries</Tab>
        </TabStrip>
        <DockNote>No Properties</DockNote>
      </Dock>
    </Workspace>
  </Shell>
);

export default App;
